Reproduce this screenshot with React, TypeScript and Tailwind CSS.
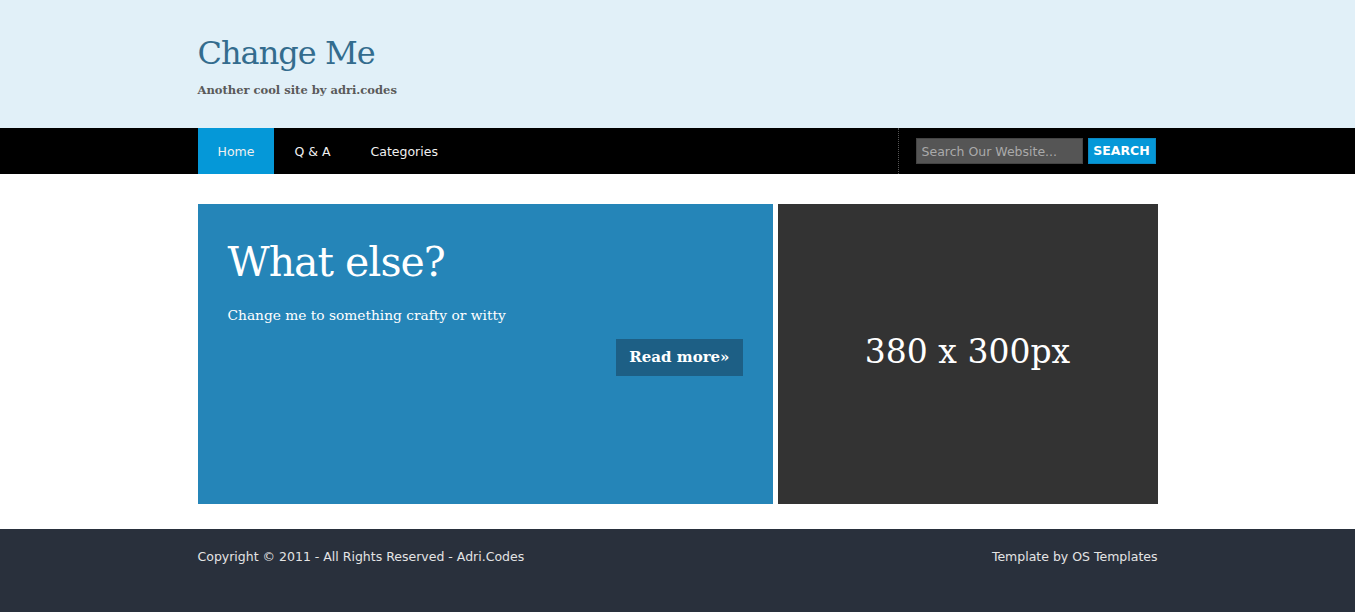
export default function App() {
  const serif = "font-['DejaVu_Serif',Georgia,serif]";
  return (
    <div className="min-h-[612px] bg-white font-['DejaVu_Sans',Verdana,sans-serif]">
      {/* Header */}
      <header className="h-[128px] bg-[#e1f0f8]">
        <div className="mx-auto w-[960px] pt-[33px]">
          <h1 className={`${serif} text-[32px] leading-[40px] tracking-[-1px] text-[#336c8e]`}>
            Change Me
          </h1>
          <p className={`${serif} mt-[9px] text-[11.5px] font-bold text-[#5a5a5a]`}>
            Another cool site by adri.codes
          </p>
        </div>
      </header>

      {/* Nav */}
      <nav className="h-[46px] bg-black">
        <div className="mx-auto flex h-full w-[960px] items-stretch justify-between">
          <ul className="flex text-[12.5px] text-[#f0f0f0]">
            <li className="flex items-center bg-[#0598d8] px-[20px] pt-[3px]">Home</li>
            <li className="flex items-center px-[20px] pt-[3px]">Q &amp; A</li>
            <li className="flex items-center px-[20px] pt-[3px]">Categories</li>
          </ul>
          <div className="flex items-center gap-[5px] border-l border-dotted border-[#555] pl-[17px] pr-[2px]">
            <input
              className="h-[26px] w-[167px] border border-[#444] bg-[#555] px-[5px] text-[12.5px] text-[#aaa] outline-none placeholder:text-[#aaa]"
              placeholder="Search Our Website..."
            />
            <button className="h-[26px] w-[68px] border border-[#0a86c0] bg-[#0598d8] pt-[1px] text-[12.5px] font-bold text-white">
              SEARCH
            </button>
          </div>
        </div>
      </nav>

      {/* Content */}
      <main className="mx-auto flex w-[960px] gap-[5px] pt-[30px] pb-[25px]">
        <section className="h-[300px] w-[575px] bg-[#2585b8] px-[30px] pt-[30px] text-white">
          <h2 className={`${serif} text-[41px] leading-[56px] tracking-[-1px]`}>What else?</h2>
          <p className={`${serif} mt-[15px] text-[13.75px]`}>Change me to something crafty or witty</p>
          <div className="mt-[13px] flex justify-end">
            <a className={`${serif} bg-[#1d5f85] px-[13px] py-[8px] text-[15px] font-bold leading-[21px]`}>
              Read more»
            </a>
          </div>
        </section>
        <section className="flex h-[300px] w-[380px] items-center justify-center bg-[#333333] pb-[4px]">
          <span className={`${serif} text-[33px] text-white`}>380 x 300px</span>
        </section>
      </main>

      {/* Footer */}
      <footer className="h-[83px] bg-[#29303c]">
        <div className="mx-auto flex w-[960px] justify-between pt-[19px] text-[12.5px] text-[#e4e4e4]">
          <span>Copyright © 2011 - All Rights Reserved - Adri.Codes</span>
          <span>Template by OS Templates</span>
        </div>
      </footer>
    </div>
  );
}
